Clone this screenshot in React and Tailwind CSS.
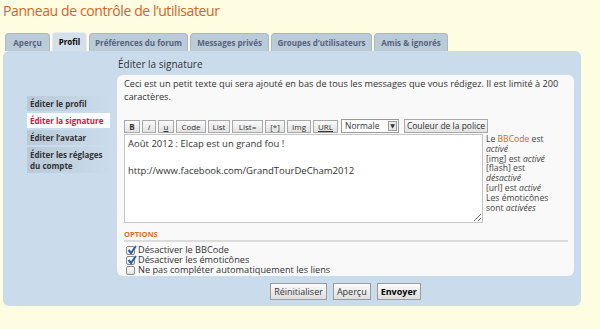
import React from "react";

const tabs = [
  { title: "Aperçu", w: "w-[45px]" },
  { title: "Profil", w: "w-[35px]", active: true },
  { title: "Préférences du forum", w: "w-[99px]" },
  { title: "Messages privés", w: "w-[79px]" },
  { title: "Groupes d’utilisateurs", w: "w-[101px]" },
  { title: "Amis & ignorés", w: "w-[74px]" },
];

const menu = [
  { title: "Éditer le profil" },
  { title: "Éditer la signature", active: true },
  { title: "Éditer l’avatar" },
  { title: "Éditer les réglages du compte" },
];

const tools = [
  { label: "B", cls: "font-bold w-[16px]" },
  { label: "i", cls: "italic w-[14px]" },
  { label: "u", cls: "underline w-[16px]" },
  { label: "Code", cls: "w-[30px]" },
  { label: "List", cls: "w-[22px]" },
  { label: "List=", cls: "w-[31px]" },
  { label: "[*]", cls: "w-[20px]" },
  { label: "Img", cls: "w-[24px]" },
  { label: "URL", cls: "underline w-[25px]" },
];

const Checkbox = ({ checked }) => (
  <span className="relative inline-block w-[9px] h-[9px] border border-[#8a8a8a] rounded-[2px] bg-gradient-to-b from-white to-[#e4e4e4] mr-[3px] shrink-0">
    {checked && (
      <svg
        viewBox="0 0 10 10"
        className="absolute left-[0px] top-[-2px] w-[10px] h-[10px]"
      >
        <path
          d="M1.5 5 L4 8 L9 1"
          fill="none"
          stroke="#2d5fa8"
          strokeWidth="2"
        />
      </svg>
    )}
  </span>
);

const App = () => {
  return (
    <div
      className="w-[600px] h-[329px] bg-[#fefde1] overflow-hidden text-[#333]"
      style={{ fontFamily: '"Open Sans", "DejaVu Sans", sans-serif' }}
    >
      {/* Title */}
      <h1 className="pl-[3px] pt-[0px] h-[32px] text-[14px] tracking-[-0.4px] leading-[22px] text-[#d3631f]">
        Panneau de contrôle de l’utilisateur
      </h1>

      {/* Tabs */}
      <div className="flex items-end gap-[2px] pl-[5px] h-[19px]">
        {tabs.map((tab) => (
          <div
            key={tab.title}
            className={
              tab.active
                ? `${tab.w} h-[19px] rounded-t-[4px] bg-[#d3e0eb] border border-b-0 border-[#e6ecf2] text-black text-[8px] font-bold flex items-center justify-center`
                : `${tab.w} h-[18px] rounded-t-[4px] bg-[#bccbd8] border border-b-0 border-[#a9b8c6] text-[#536482] text-[8px] font-bold flex items-center justify-center`
            }
          >
            {tab.title}
          </div>
        ))}
      </div>

      {/* Panel */}
      <div className="ml-[3px] w-[578px] h-[255px] bg-[#cadceb] rounded-[6px] flex pr-[8px]">
        {/* Side menu */}
        <div className="w-[107px] shrink-0 pl-[24px] pt-[45px] flex flex-col gap-[2px]">
          {menu.map((item) => (
            <div
              key={item.title}
              className={
                item.active
                  ? "px-[3px] py-[2px] bg-white text-[#d31141] text-[8px] font-bold leading-[11px]"
                  : "px-[3px] py-[2px] bg-gradient-to-r from-[#b9c9d8] to-[#cadceb] text-[#333] text-[8px] font-bold leading-[11px]"
              }
            >
              {item.title}
            </div>
          ))}
        </div>

        {/* Main */}
        <div className="flex-1 flex flex-col pl-[7px]">
          <h2 className="h-[24px] pl-[1px] pt-[7px] text-[10px] leading-[13px] text-[#333]">
            Éditer la signature
          </h2>
          <div className="bg-[#f9f9f9] rounded-[6px] pl-[7px] pr-[6px] pt-[2px] h-[201px]">
            <p className="text-[9.2px] leading-[13px] text-[#333] w-[444px]">
              Ceci est un petit texte qui sera ajouté en bas de tous les
              messages que vous rédigez. Il est limité à 200 caractères.
            </p>

            {/* Toolbar */}
            <div className="flex items-center gap-[2px] mt-[16px] h-[14px]">
              {tools.map((t) => (
                <div
                  key={t.label}
                  className={`h-[13px] shrink-0 border border-[#a8a8a8] bg-gradient-to-b from-[#fafafa] to-[#e2e2e2] text-[8px] leading-[11px] text-[#333] flex items-center justify-center ${t.cls}`}
                >
                  {t.label}
                </div>
              ))}
              <div className="ml-[1px] w-[58px] h-[14px] shrink-0 border border-[#9a9a9a] bg-white flex items-center justify-between pl-[3px] pr-[1px] text-[8.5px] text-[#333]">
                <span>Normale</span>
                <span className="w-[9px] h-[10px] border border-[#9a9a9a] bg-[#e8e8e8] text-[6px] leading-[8px] flex items-center justify-center">
                  ▼
                </span>
              </div>
              <div className="ml-[3px] w-[84px] h-[14px] shrink-0 border border-[#a8a8a8] bg-gradient-to-b from-[#fafafa] to-[#e2e2e2] text-[8.5px] text-[#333] flex items-center justify-center">
                Couleur de la police
              </div>
            </div>

            {/* Editor row */}
            <div className="flex mt-[1px]">
              <textarea
                className="w-[359px] h-[89px] shrink-0 border border-[#c5c5c5] bg-white px-[3px] py-[2px] text-[9.5px] leading-[13.5px] text-[#333] resize outline-none"
                style={{ fontFamily: '"Open Sans", "DejaVu Sans", sans-serif' }}
                defaultValue={
                  "Août 2012 : Elcap est un grand fou !\n\nhttp://www.facebook.com/GrandTourDeCham2012"
                }
              />
              <div className="pl-[3px] pt-[1px] w-[74px] text-[8.6px] leading-[9.8px] text-[#444]">
                Le <span className="text-[#d3631f]">BBCode</span> est{" "}
                <em>activé</em>
                <br />
                [img] est <em>activé</em>
                <br />
                [flash] est <em>désactivé</em>
                <br />
                [url] est <em>activé</em>
                <br />
                Les émoticônes sont <em>activées</em>
              </div>
            </div>

            {/* Options */}
            <div className="mt-[6px] border-b-2 border-[#dcdcdc] pb-[1px] text-[7.5px] font-bold text-[#dc6a2b] leading-[10px]">
              OPTIONS
            </div>
            <div className="pt-[3px] pl-[2px] flex flex-col text-[9.2px] leading-[10px] text-[#333]">
              <label className="flex items-center h-[10px]">
                <Checkbox checked />
                Désactiver le BBCode
              </label>
              <label className="flex items-center h-[10px]">
                <Checkbox checked />
                Désactiver les émoticônes
              </label>
              <label className="flex items-center h-[10px]">
                <Checkbox />
                Ne pas compléter automatiquement les liens
              </label>
            </div>
          </div>

          {/* Buttons */}
          <div className="flex justify-center gap-[6px] mt-[7px]">
            <button className="h-[17px] px-[3px] border border-[#9c9c9c] bg-gradient-to-b from-[#fbfbfb] to-[#dedede] text-[9px] text-[#333] leading-[13px]">
              Réinitialiser
            </button>
            <button className="h-[17px] px-[3px] border border-[#9c9c9c] bg-gradient-to-b from-[#fbfbfb] to-[#dedede] text-[9px] text-[#333] leading-[13px]">
              Aperçu
            </button>
            <button className="h-[17px] px-[3px] border border-[#9c9c9c] bg-gradient-to-b from-[#fbfbfb] to-[#dedede] text-[9px] font-bold text-black leading-[13px]">
              Envoyer
            </button>
          </div>
        </div>
      </div>
    </div>
  );
};

export default App;
